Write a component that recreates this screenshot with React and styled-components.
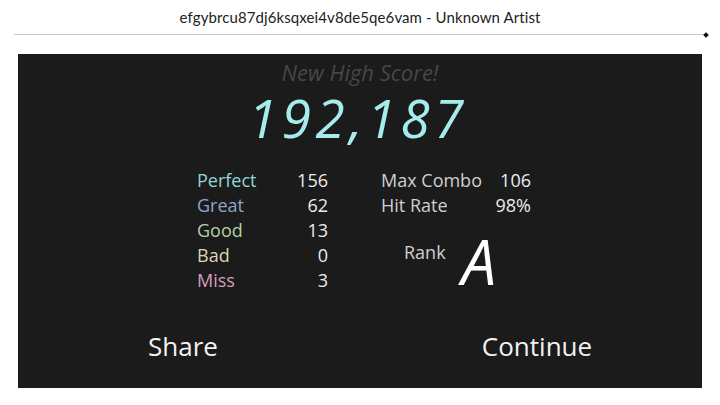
import React from 'react';
import styled, { createGlobalStyle } from 'styled-components';

const GlobalStyle = createGlobalStyle`
  html, body {
    margin: 0;
    padding: 0;
    background: #fff;
  }
  body {
    width: 720px;
    height: 405px;
    overflow: hidden;
    font-family: "Open Sans", "Noto Sans", sans-serif;
  }
`;

const Page = styled.div`
  display: flex;
  flex-direction: column;
  width: 720px;
  height: 405px;
`;

const SongTitle = styled.h1`
  margin: 0;
  height: 34px;
  line-height: 34px;
  text-align: center;
  color: #222;
  font-family: Lato, "Liberation Sans", sans-serif;
  font-weight: 400;
  font-size: 15px;
  letter-spacing: 0.1px;
`;

const Progress = styled.div`
  display: flex;
  align-items: center;
  height: 1px;
  margin: 0 12px 0 14px;
`;

const Track = styled.div`
  flex: 1;
  height: 1px;
  background: #c8c8c8;
`;

const Knob = styled.div`
  width: 4px;
  height: 4px;
  background: #111;
  transform: rotate(45deg);
`;

const Panel = styled.section`
  display: flex;
  flex-direction: column;
  align-items: center;
  height: 334px;
  margin: 19px 18px 0;
  background: #1b1b1b;
  color: #e8e8e8;
`;

const HighScore = styled.div`
  margin-top: 7px;
  height: 22px;
  line-height: 22px;
  color: #474747;
  font-style: italic;
  font-size: 22px;
`;

const Score = styled.div`
  margin-top: -1px;
  height: 72px;
  line-height: 72px;
  color: #a6ecec;
  font-style: italic;
  font-size: 53px;
  letter-spacing: 4.5px;
  padding-right: 4px;
`;

const Stats = styled.div`
  display: flex;
  gap: 53px;
  margin: 13px 0 0 8px;
`;

const Table = styled.div`
  display: grid;
  grid-template-columns: 1fr auto;
  grid-auto-rows: 25px;
  align-items: center;
  width: ${(p) => p.$width}px;
  align-content: start;
  font-size: 18px;
`;

const Label = styled.span`
  color: ${(p) => p.$color || '#cfcfcf'};
`;

const Value = styled.span`
  text-align: right;
  color: #ececec;
`;

const RankRow = styled.div`
  grid-column: 1 / -1;
  display: flex;
  align-items: center;
  gap: 16px;
  margin-top: 44px;
  padding-left: 23px;
  color: #cfcfcf;
`;

const RankLetter = styled.span`
  color: #fff;
  font-style: italic;
  font-size: 62px;
  line-height: 50px;
  margin-top: 18px;
`;

const Actions = styled.div`
  display: flex;
  justify-content: space-between;
  align-self: stretch;
  margin-top: auto;
  margin-bottom: 22px;
  padding: 0 55px;
`;

const Action = styled.button`
  width: 220px;
  padding: 0;
  border: none;
  background: none;
  color: #f2f2f2;
  font-family: inherit;
  font-size: 26px;
  line-height: 40px;
  cursor: pointer;
`;

const judgements = [
  ['Perfect', 156, '#8fd6d6'],
  ['Great', 62, '#8ea6c9'],
  ['Good', 13, '#b4cfa6'],
  ['Bad', 0, '#dcd6b2'],
  ['Miss', 3, '#d59fbb'],
];

export default function App() {
  return (
    <Page>
      <GlobalStyle />
      <SongTitle>efgybrcu87dj6ksqxei4v8de5qe6vam - Unknown Artist</SongTitle>
      <Progress>
        <Track />
        <Knob />
      </Progress>
      <Panel>
        <HighScore>New High Score!</HighScore>
        <Score>192,187</Score>
        <Stats>
          <Table $width={131}>
            {judgements.map(([name, count, color]) => (
              <React.Fragment key={name}>
                <Label $color={color}>{name}</Label>
                <Value>{count}</Value>
              </React.Fragment>
            ))}
          </Table>
          <Table $width={150}>
            <Label>Max Combo</Label>
            <Value>106</Value>
            <Label>Hit Rate</Label>
            <Value>98%</Value>
            <RankRow>
              <span>Rank</span>
              <RankLetter>A</RankLetter>
            </RankRow>
          </Table>
        </Stats>
        <Actions>
          <Action type="button">Share</Action>
          <Action type="button">Continue</Action>
        </Actions>
      </Panel>
    </Page>
  );
}
